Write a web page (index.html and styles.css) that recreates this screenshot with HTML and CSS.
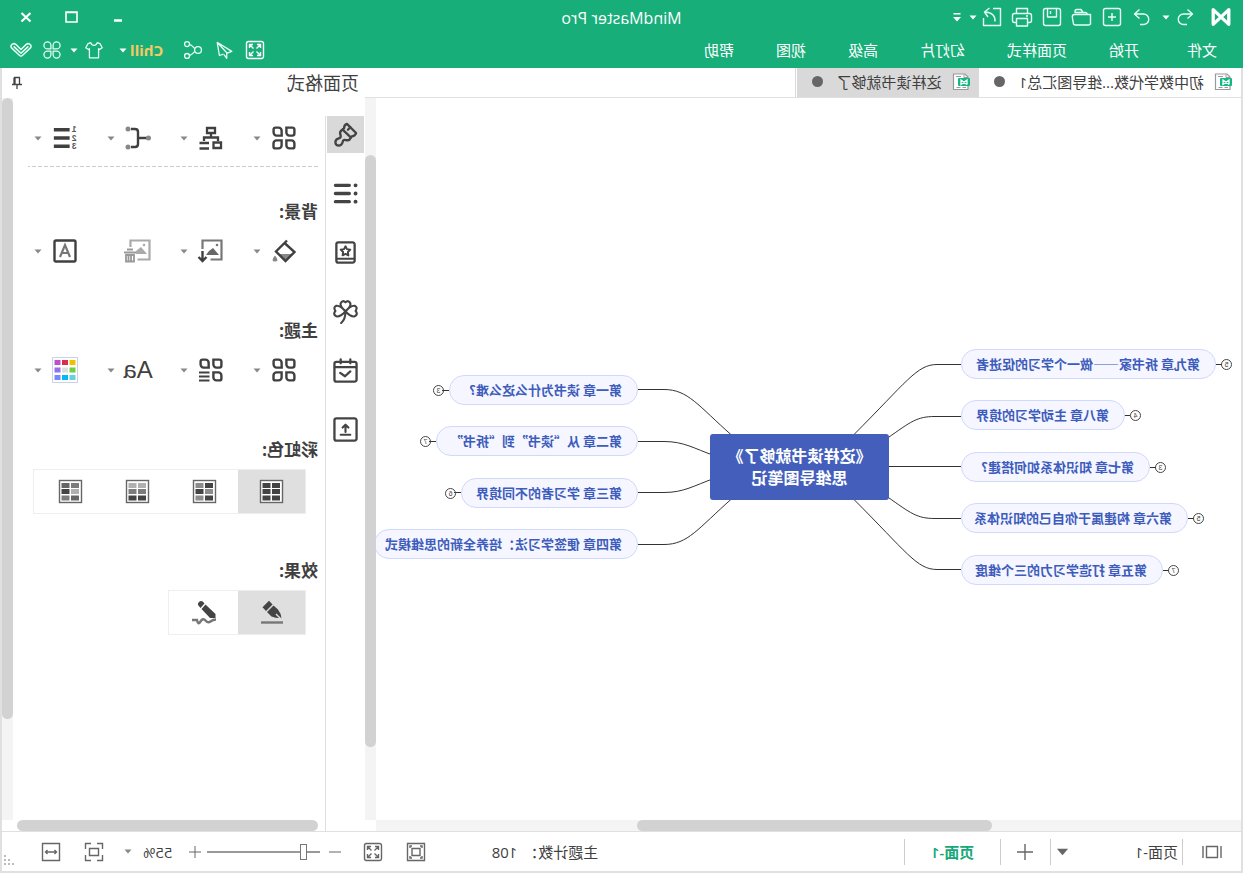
FILE: index.html
```html
<!DOCTYPE html>
<html lang="zh-CN">
<head>
<meta charset="utf-8">
<title>MindMaster Pro</title>
<link rel="stylesheet" href="styles.css">
</head>
<body>
<svg class="sprite" aria-hidden="true">
  <symbol id="caret" viewBox="0 0 8 5"><path d="M.5.5h7L4 4.5z" fill="currentColor"/></symbol>
  <symbol id="leaves" viewBox="0 0 24 24"><g fill="none" stroke="currentColor" stroke-width="2.4"><path d="M1.6 3.6a2 2 0 0 1 2-2h6v5a3 3 0 0 1-3 3h-3a2 2 0 0 1-2-2z"/><path d="M14.4 4.6a3 3 0 0 1 3-3h3a2 2 0 0 1 2 2v3a3 3 0 0 1-3 3h-5.1z"/><path d="M1.6 17.4a3 3 0 0 1 3-3h5v5a3 3 0 0 1-3 3h-3a2 2 0 0 1-2-2z"/><path d="M14.4 14.4h5.1a3 3 0 0 1 3 3v3a2 2 0 0 1-2 2h-3.1a3 3 0 0 1-3-3z"/></g></symbol>
  <symbol id="expand" viewBox="0 0 20 20"><rect x="1.5" y="1.5" width="17" height="17" rx="2" fill="none" stroke="currentColor" stroke-width="1.4"/><path d="M4.5 8V4.5H8M12 4.5h3.5V8M15.500 12v3.500H12M8 15.500H4.500V12M5 5l3.500 3.500M15 5l-3.500 3.500M15 15l-3.500-3.500M5 15l3.500-3.500" fill="none" stroke="currentColor" stroke-width="1.400"/></symbol>
  <symbol id="doc" viewBox="0 0 18 18"><path d="M5 1h11.500v15.500H2V4z" fill="#fff" stroke="#999" stroke-width="1.200"/><path d="M6 1.500V4.500H2M4 14.500h3.500M9.500 14.500h4M9 3.500h5" fill="none" stroke="#999"/><rect x="0" y="5" width="12" height="8" rx="1" fill="#10b981"/><path d="M3 11.500V7l6 4.500V7l-6 4.500" fill="none" stroke="#fff" stroke-width="1.300"/></symbol>
</svg>

<div class="window">
  <header class="header">
    <div class="titlebar">
      <div class="quick">
        <svg class="logo" viewBox="0 0 24 24"><path d="M3.500 4v16L20.500 4v16z" fill="none" stroke="#fff" stroke-width="3.600" stroke-linejoin="round"/></svg>
        <button class="tool" aria-label="撤销"><svg viewBox="0 0 24 24"><path d="M9.500 4.500l-5 4.500 5 4.500M5 9h8.500a5 5 0 0 1 0 10.500H10"/></svg></button>
        <button class="drop" aria-label="撤销列表"><svg><use href="#caret"/></svg></button>
        <button class="tool" aria-label="重做"><svg viewBox="0 0 24 24"><path d="M14.500 4.500l5 4.500-5 4.500M19 9h-8.500a5 5 0 0 0 0 10.500H14"/></svg></button>
        <button class="tool" aria-label="新建"><svg viewBox="0 0 24 24"><rect x="3.500" y="3.500" width="17" height="17" rx="2"/><path d="M12 8v8M8 12h8"/></svg></button>
        <button class="tool" aria-label="打开"><svg viewBox="0 0 24 24"><path d="M3.500 19.500V9.500h3q.5-2 2-2H19V6.500q0-2-2-2h-4l-2 3M3.500 9.500v8.500q0 2 2 2h13q2 0 2.200-2l1-6q0-2.500-2-2.500H6" /></svg></button>
        <button class="tool" aria-label="保存"><svg viewBox="0 0 24 24"><rect x="3.500" y="3.500" width="17" height="17" rx="2"/><path d="M7.500 4v8h9V4M13.500 6v3"/></svg></button>
        <button class="tool" aria-label="打印"><svg viewBox="0 0 24 24"><path d="M6.500 8.500v-5h11v5M6.500 17.500h-2q-2 0-2-2v-5q0-2 2-2h15q2 0 2 2v5q0 2-2 2h-2M6.500 13.500h11v7.500h-11zM6 11h2"/></svg></button>
        <button class="tool" aria-label="导出"><svg viewBox="0 0 24 24"><path d="M11 3.500H3.500v17h17V13M9 16.500c-.5-6 3-9 10-9.500M14.500 3l5 4-3.500 5"/></svg></button>
        <button class="drop" aria-label="导出选项"><svg><use href="#caret"/></svg></button>
        <button class="overflow" aria-label="自定义工具栏"><svg viewBox="0 0 10 12"><path d="M1.500 2h7v1.500h-7zM1 6h8l-4 4.500z"/></svg></button>
      </div>
      <h1 class="title">MindMaster Pro</h1>
      <div class="controls">
        <button aria-label="最小化"><svg viewBox="0 0 16 16"><path d="M4 11.500h8" stroke-width="2.500"/></svg></button>
        <button aria-label="最大化"><svg viewBox="0 0 16 16"><path d="M3 3h11v10H3zM3 3.500h11" stroke-width="1.600"/></svg></button>
        <button aria-label="关闭"><svg viewBox="0 0 16 16"><path d="M3.500 4l9 8.500M12.500 4l-9 8.500" stroke-width="2.200"/></svg></button>
      </div>
    </div>
    <div class="menubar">
      <nav class="menus">
        <button class="file">文件</button><button>开始</button><button>页面样式</button><button>幻灯片</button><button>高级</button><button>视图</button><button>帮助</button>
      </nav>
      <div class="extras">
        <button class="tool" aria-label="全屏"><svg class="s20"><use href="#expand"/></svg></button>
        <button class="tool" aria-label="发送"><svg viewBox="0 0 24 24"><path d="M19.500 3.500L3.500 13.500l5 2M19.500 3.500L17 18l-4.500-1.500M19.500 3.500L9 15v6l3-4"/></svg></button>
        <button class="tool" aria-label="分享"><svg viewBox="0 0 24 24"><circle cx="6.500" cy="12" r="3.700"/><circle cx="18.500" cy="5.500" r="2.700"/><circle cx="18.500" cy="18.500" r="2.700"/><path d="M10 10.500l2.500-2.500q1.500-1.500 3.300-1.800M10 13.500l2.500 2.500q1.500 1.500 3.300 1.800"/></svg></button>
        <button class="user">Chill</button>
        <button class="drop" aria-label="账户菜单"><svg><use href="#caret"/></svg></button>
        <button class="tool" aria-label="皮肤"><svg viewBox="0 0 24 24"><path d="M8.500 4l-3 1L3 9.500l3 2 1-1v10h10v-10l1 1 3-2L18.500 5l-3-1q-1 3-3.500 3T8.500 4z"/></svg></button>
        <button class="drop" aria-label="皮肤列表"><svg><use href="#caret"/></svg></button>
        <button class="tool" aria-label="应用"><svg viewBox="0 0 24 24"><path d="M10.800 10.800H7A3.800 3.800 0 1 1 10.800 7zM13.200 10.800V7a3.800 3.800 0 1 1 3.800 3.800zM10.800 13.200V17A3.800 3.800 0 1 1 7 13.200zM13.200 13.200H17a3.800 3.800 0 1 1-3.800 3.800z"/></svg></button>
        <button class="tool" aria-label="折叠"><svg viewBox="0 0 24 24"><path d="M1.500 6.500q2.500-2.500 5-.5l5.500 5.500L17.500 6q2.500-2 5 .500 1 2-.500 3.500l-8.500 8q-1.500 1.300-3 0L2 10q-1.500-1.500-.5-3.500zM4 8l8 7.500L20 8" stroke-width="1.700"/></svg></button>
      </div>
    </div>
  </header>

  <main class="workspace">
    <section class="document">
      <div class="tabs">
        <button class="tab"><svg><use href="#doc"/></svg><span>初中数学代数...维导图汇总1</span><i></i></button>
        <button class="tab active"><svg><use href="#doc"/></svg><span>这样读书就够了</span><i></i></button>
      </div>
      <div class="view">
        <div class="canvas">
          <svg class="links" width="865" height="722" aria-hidden="true">
            <path d="M280 266.500h24c20 0 30 17 84 71M280 318.500h26c18 0 24 5 48 22M280 368.500h80M280 420.500h26c18 0 24-5 48-22M280 471.500h24c20 0 30-17 84-71M603 291.500h-26c-24 0-34 16-68 46M603 343.500h-26c-20 0-30 7-50 14M603 394.500h-26c-20 0-30-7-50-14M603 446.500h-26c-24 0-34-16-68-46"/>
            <path d="M19 266.500h6M111 317.500h6M85 369.500h6M47 420.500h6M72 472.500h6M792 292.500h7M805 343.500h7M780 394.500h7"/>
          </svg>
          <div class="root">《这样读书就够了》<br>思维导图笔记</div>
          <div class="node n9">第九章 拆书家——做一个学习的促进者<b>5</b></div>
          <div class="node n8">第八章 主动学习的境界<b>4</b></div>
          <div class="node n7">第七章 知识体系如何搭建?<b>3</b></div>
          <div class="node n6">第六章 构建属于你自己的知识体系<b>5</b></div>
          <div class="node n5">第五章 打造学习力的三个维度<b>7</b></div>
          <div class="node right n1">第一章 读书为什么这么难?<b>3</b></div>
          <div class="node right n2">第二章 从“读书”到“拆书”<b>7</b></div>
          <div class="node right n3">第三章 学习者的不同境界<b>6</b></div>
          <div class="node right n4">第四章 便签学习法：培养全新的思维模式</div>
        </div>
        <div class="vscroll"><div class="thumb"></div></div>
        <div class="hscroll"><div class="thumb"></div></div>
      </div>
    </section>

    <aside class="panel">
      <div class="panel-head">
        <h2>页面格式</h2>
        <button class="pin" aria-label="固定"><svg viewBox="0 0 12 14"><path d="M3 1.500h6M3.500 1.500v7M8 1.500v7M9 1.500v7M1 8.500h10M6 8.500V13"/></svg></button>
      </div>
      <div class="panel-body">
        <div class="rail">
          <button class="on" aria-label="页面格式"><svg viewBox="0 0 26 26"><path d="M11.500 2L2 11.500q1 3 4.500 3.500l2.500 3.500q3 1 5 0 1.500 0 2 2.500 1 3.500 4.500 3.500 3-.5 3-3.500 0-3-3.500-4-2.500-.5-2-3 1.500-3-.5-5l-3-2.500q0-3.500-3-4.500z"/><path d="M16 8l-8.500 8M8 5.500L10.500 8"/></svg></button>
          <button aria-label="大纲"><svg viewBox="0 0 26 26"><path d="M9 4.500h14.500M9 13h14.500M9 21.500h14.500" stroke-width="3.400"/><path d="M2.500 4.500h.1M2.500 13h.1M2.500 21.500h.1" stroke-width="4"/></svg></button>
          <button aria-label="图标"><svg viewBox="0 0 26 26"><rect x="3.500" y="2.500" width="19" height="21" rx="2"/><path d="M4 19.500h18" stroke-width="2"/><path d="M13 6.500l1.500 3 3.500.5-2.500 2.500.5 3.500-3-1.500-3 1.500.5-3.500L8 10l3.500-.5z" stroke-width="2"/></svg></button>
          <button aria-label="剪贴画"><svg viewBox="0 0 26 26"><path d="M13 12.500Q7 8 8 4.500 10 .5 13 3.500q3-3 5 1 1 3.500-5 8zM13 13Q7 19 3.500 18-.5 16 2.500 12.500q-2.500-4 1-5.500 4-.5 9.500 6zM13 13q6 6 9.500 5 4-2 1-5.500 2.500-4-1-5.500-4-.5-9.500 6zM13 13q0 8 4.500 12" stroke-width="2.200"/></svg></button>
          <button aria-label="任务"><svg viewBox="0 0 26 26"><rect x="1.500" y="4" width="23" height="20.500" rx="2"/><path d="M2 9.500h22M8 1.500v4M18 1.500v4"/><path d="M18 14.500l-6-1-4 6.500" stroke="none"/><path d="M8 14l5.500 5 5-3.500"/></svg></button>
          <button aria-label="导出"><svg viewBox="0 0 26 26"><rect x="1.500" y="1.500" width="23" height="23" rx="2"/><path d="M8 18.500h10M13 15.500V9M10 11l3-3 3 3" stroke-width="2.200"/></svg></button>
        </div>
        <div class="content">
          <div class="options first">
            <button aria-label="布局"><svg class="ico"><use href="#leaves"/></svg><svg class="arrow"><use href="#caret"/></svg></button>
            <button aria-label="结构"><svg class="ico" viewBox="0 0 24 24"><path d="M8 2h8v5H8zM12 7v4M5 15v-3.500h14V15M2 16.500h7.500V22H2zM14 17h9.500M14 22.500h9.500" fill="none" stroke="currentColor" stroke-width="2.300"/></svg><svg class="arrow"><use href="#caret"/></svg></button>
            <button aria-label="连线"><svg class="ico wide" viewBox="0 0 28 26"><path d="M5 13h9M21 4h-4q-3 0-3 3v12q0 3 3 3h4" fill="none" stroke="currentColor" stroke-width="2.400"/><circle cx="3.500" cy="13" r="2.500" fill="#888"/><circle cx="24" cy="4" r="2.500" fill="#888"/><circle cx="24" cy="22" r="2.500" fill="#888"/></svg><svg class="arrow"><use href="#caret"/></svg></button>
            <button aria-label="编号"><svg class="ico wide" viewBox="0 0 28 28"><path d="M9 5h17M9 14h17M9 23h17" stroke="currentColor" stroke-width="3.800"/><g class="digits"><text x="4" y="8">1</text><text x="4" y="17">2</text><text x="4" y="26">3</text></g></svg><svg class="arrow"><use href="#caret"/></svg></button>
          </div>
          <h3>背景:</h3>
          <div class="options">
            <button aria-label="背景颜色"><svg class="ico" viewBox="0 0 24 24"><path d="M4 15h13l-6 6.500z" fill="#888"/><path d="M9 1.500l11 11-9.500 9.500L1.500 13 12 3.500" fill="none" stroke="currentColor" stroke-width="2.400"/><path d="M21 16.500q5 6 0 6t0-6z" fill="#888"/></svg><svg class="arrow"><use href="#caret"/></svg></button>
            <button aria-label="背景图片"><svg class="ico wide" viewBox="0 0 28 26"><path d="M22.500 11V2.500h-19v19h11" fill="none" stroke="#777" stroke-width="2.200"/><path d="M6 17l6-7 4 3 3 4z" fill="#666"/><circle cx="8" cy="7" r="1.300" fill="#777"/><path d="M22.500 13v10M18.500 19l4 4 4-4" fill="none" stroke="currentColor" stroke-width="2.400"/></svg><svg class="arrow"><use href="#caret"/></svg></button>
            <button aria-label="删除背景图片" disabled><svg class="ico wide" viewBox="0 0 28 26"><path d="M21.500 9V2.500H2.500v19h12" fill="none" stroke="#aaa" stroke-width="2.200"/><path d="M5 16l6-7 5 4v3z" fill="#aaa"/><circle cx="8" cy="7" r="1.300" fill="#aaa"/><path d="M16 14.500h12M19 11.500h6M18 17v6.500h8V17zM21 17v6M23.500 17v6" fill="none" stroke="#999" stroke-width="1.800"/></svg></button>
            <button aria-label="水印"><svg class="ico" viewBox="0 0 24 24"><rect x="1.500" y="1.500" width="21" height="21" rx="1.500" fill="none" stroke="currentColor" stroke-width="2.400"/><path d="M7 18l5-12 5 12M9 14h6" fill="none" stroke="#777" stroke-width="2.200"/></svg><svg class="arrow"><use href="#caret"/></svg></button>
          </div>
          <h3>主题:</h3>
          <div class="options">
            <button aria-label="主题样式"><svg class="ico"><use href="#leaves"/></svg><svg class="arrow"><use href="#caret"/></svg></button>
            <button aria-label="主题列表"><svg class="ico" viewBox="0 0 24 24"><g fill="none" stroke="currentColor" stroke-width="2.400"><path d="M1.600 3.600a2 2 0 0 1 2-2h6v5a3 3 0 0 1-3 3h-3a2 2 0 0 1-2-2z"/><path d="M14.400 4.600a3 3 0 0 1 3-3h3a2 2 0 0 1 2 2v3a3 3 0 0 1-3 3h-5.100z"/><path d="M1.600 17.400a3 3 0 0 1 3-3h5v5a3 3 0 0 1-3 3h-3a2 2 0 0 1-2-2z"/><path d="M13.500 14.500H24M13.500 18.500H24M13.500 22.500H24" stroke-width="2"/></g></svg><svg class="arrow"><use href="#caret"/></svg></button>
            <button aria-label="主题字体"><span class="aa">Aa</span><svg class="arrow"><use href="#caret"/></svg></button>
            <button aria-label="主题颜色"><svg class="ico wide" viewBox="0 0 26 26"><rect x=".5" y=".5" width="25" height="25" fill="#fff" stroke="#ccd3e8"/><g><path d="M2.500 3h6v5h-6z" fill="#eec200"/><path d="M10 3h6v5h-6z" fill="#dc2b4e"/><path d="M17.500 3h6v5h-6z" fill="#bd50cc"/><path d="M2.500 10.500h6v5h-6z" fill="#72cf3e"/><path d="M10 10.500h6v5h-6z" fill="#ddd"/><path d="M17.500 10.500h6v5h-6z" fill="#9470ec"/><path d="M2.500 18h6v5h-6z" fill="#67d0dd"/><path d="M10 18h6v5h-6z" fill="#05b8f5"/><path d="M17.500 18h6v5h-6z" fill="#7688ff"/></g></svg><svg class="arrow"><use href="#caret"/></svg></button>
          </div>
          <h3>彩虹色:</h3>
          <div class="group four">
            <button class="on" aria-label="单色"><svg viewBox="0 0 25 25"><rect x="1.500" y="1.500" width="22" height="22"/><path d="M4 4h8v5H4zM13.500 4h8v5h-8zM4 10h8v5H4zM13.500 10h8v5h-8zM4 16.500h8v5H4zM13.500 16.500h8v5h-8z" fill="#444"/></svg></button>
            <button aria-label="彩虹色一"><svg viewBox="0 0 25 25"><rect x="1.500" y="1.500" width="22" height="22"/><path d="M4 4h8v5H4zM13.500 10h8v5h-8zM4 16.500h8v5H4z" fill="#444"/><path d="M13.500 4h8v5h-8zM4 10h8v5H4zM13.500 16.500h8v5h-8z" fill="#8c8c8c"/></svg></button>
            <button aria-label="彩虹色二"><svg viewBox="0 0 25 25"><rect x="1.500" y="1.500" width="22" height="22"/><path d="M4 4h8v5H4zM13.500 4h8v5h-8z" fill="#b0b0b0"/><path d="M4 10h8v5H4zM13.500 10h8v5h-8z" fill="#7c7c7c"/><path d="M4 16.500h8v5H4zM13.500 16.500h8v5h-8z" fill="#444"/></svg></button>
            <button aria-label="彩虹色三"><svg viewBox="0 0 25 25"><rect x="1.500" y="1.500" width="22" height="22"/><path d="M4 4h8v5H4zM13.500 16.500h8v5h-8z" fill="#7c7c7c"/><path d="M4 10h8v5H4z" fill="#b0b0b0"/><path d="M4 16.500h8v5H4zM13.500 4h8v5h-8z" fill="#666"/><path d="M13.500 10h8v5h-8z" fill="#444"/></svg></button>
          </div>
          <h3 class="after">效果:</h3>
          <div class="group two">
            <button class="on" aria-label="普通"><svg viewBox="0 0 25 25"><path d="M1 22.500h22" stroke="#777" stroke-width="2.400"/><path d="M11.500 4.500L15 .8l6.500 6.500L18 11zM10.500 5.500l6.500 6.500-4.500 4.500q-4 1.500-7.500 1.500l3.500-3.500-1-1L4 17q-1 .5-1.500 1.500Q2.500 14 6 9.500z" fill="#444"/></svg></button>
            <button aria-label="手绘"><svg viewBox="0 0 25 25"><path d="M1 19.500q3 0 5.500 2t5-1 5 1 3.500-1.500h5" fill="none" stroke="#777" stroke-width="2.400"/><path d="M12.500 3.500q2.500-3.500 5-2 2 1 1.500 3.500l-2.500 3zM11.500 4.500l4 4.500-8.500 9H1.500v-4z" fill="#444"/></svg></button>
          </div>
        </div>
        <div class="vscroll"><div class="thumb"></div></div>
        <div class="hscroll"><div class="thumb"></div></div>
      </div>
    </aside>
  </main>

  <footer class="status">
    <button class="pages" aria-label="页面列表"><svg viewBox="0 0 20 16"><path d="M1 2v12M19 2v12M4.500 2.500h11v11h-11z"/></svg></button>
    <button class="current"><span>页面-1</span><svg><use href="#caret"/></svg></button>
    <button class="add" aria-label="添加页面"><svg viewBox="0 0 18 18"><path d="M9 1v16M1 9h16"/></svg></button>
    <button class="page">页面-1</button>
    <div class="count">主题计数：<span>108</span></div>
    <div class="zoom">
      <button class="sbtn" aria-label="适应窗口"><svg viewBox="0 0 20 20"><path d="M1.500 1.500h17v17h-17zM6 6.500h8v7H6zM4 6V4h2M14 4h2v2M16 14v2h-2M6 16H4v-2"/></svg></button>
      <button class="sbtn" aria-label="全屏"><svg><use href="#expand"/></svg></button>
      <button class="step" aria-label="缩小"><svg viewBox="0 0 14 14"><path d="M1 7h12"/></svg></button>
      <input type="range" min="0" max="100" value="12" aria-label="缩放">
      <button class="step" aria-label="放大"><svg viewBox="0 0 14 14"><path d="M1 7h12M7 1v12"/></svg></button>
      <button class="percent"><span>55%</span><svg><use href="#caret"/></svg></button>
      <button class="sbtn" aria-label="适应页面"><svg viewBox="0 0 20 20"><path d="M7 1.500H1.500V7M13 1.500h5.500V7M18.500 13v5.500H13M7 18.500H1.500V13M5.500 6.500h9v7h-9z"/></svg></button>
      <button class="sbtn" aria-label="适应宽度"><svg viewBox="0 0 20 20"><path d="M1.500 1.500h17v17h-17zM4.500 10h11M6.500 8l-2 2 2 2M13.500 8l2 2-2 2"/></svg></button>
      <svg class="grip" viewBox="0 0 10 10"><path d="M8 0h2v2H8zM8 4h2v2H8zM4 4h2v2H4zM8 8h2v2H8zM4 8h2v2H4zM0 8h2v2H0z"/></svg>
    </div>
  </footer>
</div>
</body>
</html>
```
FILE: styles.css
```css
* { box-sizing: border-box; }
html, body { height: 100%; margin: 0; }
body {
  overflow: hidden;
  color: #404040;
  font: 15px/20px "Open Sans", "Noto Sans CJK SC", sans-serif;
}
button {
  display: flex;
  align-items: center;
  justify-content: center;
  flex: none;
  margin: 0;
  padding: 0;
  border: 0;
  background: none;
  color: inherit;
  font: inherit;
  white-space: nowrap;
}
h1, h2, h3 { margin: 0; font-weight: 400; }
svg { display: block; flex: none; }
.sprite { position: absolute; width: 0; height: 0; }

/* The whole interface is laid out mirrored */
.window {
  display: flex;
  flex-direction: column;
  height: 100vh;
  transform: scaleX(-1);
  background: #fff;
}

/* Header */
.header { background: #17ae7a; color: #fff; }
.titlebar {
  display: grid;
  grid-template-columns: 1fr auto 1fr;
  align-items: center;
  height: 34px;
}
.quick, .controls, .extras, .menus { display: flex; align-items: center; }
.quick { padding-left: 10px; }
.logo { width: 24px; height: 22px; margin-right: 9px; }
.title { padding-top: 2px; font-size: 16px; line-height: 22px; }
.tool { width: 30px; height: 30px; }
.tool svg {
  width: 24px;
  height: 24px;
  fill: none;
  stroke: #e6fff5;
  stroke-width: 1.400;
  stroke-linejoin: round;
}
.tool .s20 { width: 20px; height: 20px; stroke: none; }
.drop { width: 8px; height: 20px; margin-right: 5px; }
.drop svg { width: 8px; height: 5px; }
.overflow { width: 14px; height: 20px; }
.overflow svg { width: 10px; height: 12px; fill: #fff; }
.controls { justify-content: flex-end; padding-right: 3px; }
.controls button { width: 46px; height: 32px; }
.controls svg { width: 16px; height: 16px; fill: none; stroke: #fff; }
.menubar {
  display: flex;
  justify-content: space-between;
  height: 34px;
  padding: 0 6px 2px 26px;
}
.menus { gap: 42px; }
.menus .file { margin-right: 6px; }
.extras { gap: 1px; }
.extras .drop { margin-right: 2px; }
.extras .tool svg { width: 22px; height: 22px; }
.extras .tool .s20 { width: 20px; height: 20px; }
.user { margin-left: 14px; color: #f5c963; font-weight: 700; }
.user + .drop { margin: 0 9px 0 2px; }

/* Workspace */
.workspace {
  display: flex;
  flex: 1;
  min-height: 0;
  border: solid #e0e0e0;
  border-width: 0 2px;
}
.document { display: flex; flex: 1; flex-direction: column; min-width: 0; }
.tabs { display: flex; height: 30px; border-bottom: 1px solid #e0e0e0; }
.tab { gap: 10px; padding: 0 15px 2px 9px; }
.tab svg { width: 18px; height: 18px; }
.tab i { width: 11px; height: 11px; margin-left: 4px; border-radius: 50%; background: #666; }
.tab.active { background: #d9d9d9; box-shadow: 1px 0 #fff, 2px 0 #d9d9d9; }
.view {
  display: grid;
  flex: 1;
  grid-template: minmax(0, 1fr) 11px / minmax(0, 1fr) 11px;
  min-height: 0;
}
.vscroll, .hscroll { display: flex; background: #f4f4f4; }
.vscroll { flex-direction: column; }
.thumb { border-radius: 6px; background: #d2d2d2; }
.view .vscroll .thumb { height: 82%; margin-top: 57px; }
.view .hscroll .thumb { width: 41%; margin-left: 249px; }

/* Mind map */
.canvas { position: relative; overflow: hidden; }
.links { position: absolute; top: 0; left: 0; fill: none; stroke: #333; stroke-width: 1; }
.root {
  position: absolute;
  top: 336px;
  left: 352px;
  width: 179px;
  height: 66px;
  padding-top: 10px;
  border-radius: 3px;
  background: #435fbb;
  color: #fff;
  font: 700 16px/22px "Noto Sans CJK SC", sans-serif;
  text-align: center;
}
.node {
  position: absolute;
  height: 30px;
  padding-left: 15px;
  border: 1px solid #d0d8fb;
  border-radius: 15px;
  background: #f5f6ff;
  color: #3d5cbc;
  font: 700 13px/28px "Noto Sans CJK SC", sans-serif;
  white-space: nowrap;
}
.node b {
  position: absolute;
  top: 9px;
  right: 100%;
  width: 11px;
  height: 11px;
  margin-right: 6px;
  border: 1px solid #444;
  border-radius: 50%;
  color: #444;
  font: 400 7px/9px "Liberation Sans", sans-serif;
  text-align: center;
}
.node.right b { right: auto; left: 100%; margin-left: 6px; }
.n9 { top: 251px; left: 25px; width: 255px; }
.n8 { top: 302px; left: 116px; width: 164px; }
.n7 { top: 354px; left: 91px; width: 189px; }
.n6 { top: 405px; left: 53px; width: 227px; }
.n5 { top: 457px; left: 78px; width: 202px; }
.n1 { top: 277px; left: 603px; width: 189px; }
.n2 { top: 328px; left: 603px; width: 202px; }
.n3 { top: 380px; left: 603px; width: 177px; }
.n4 { top: 431px; left: 603px; width: 264px; }

/* Format panel */
.panel { display: flex; flex: none; flex-direction: column; width: 363px; }
.panel-head {
  display: flex;
  align-items: center;
  justify-content: space-between;
  height: 30px;
  padding: 0 9px 0 6px;
}
.panel-head h2 { font-size: 18px; line-height: 24px; }
.pin svg { width: 12px; height: 14px; fill: none; stroke: #444; stroke-width: 1.300; }
.panel-body {
  display: grid;
  flex: 1;
  grid-template: minmax(0, 1fr) 11px / 40px minmax(0, 1fr) 11px;
  min-height: 0;
}
.rail {
  display: flex;
  grid-row: 1 / 3;
  flex-direction: column;
  gap: 22px;
  margin-top: 18px;
  padding-left: 1px;
  border-right: 1px solid #dedede;
}
.rail button { width: 37px; height: 37px; }
.rail .on { background: #d9d9d9; }
.rail svg {
  width: 25px;
  height: 25px;
  fill: none;
  stroke: #444;
  stroke-width: 2.400;
  stroke-linecap: round;
  stroke-linejoin: round;
}
.content { padding: 20px 15px 0 7px; overflow: hidden; }
.options { display: flex; margin-right: -20px; }
.options.first {
  margin: 0;
  padding-bottom: 9px;
  background: repeating-linear-gradient(90deg, #ccc 0 4px, transparent 4px 6px) bottom / 100% 1px no-repeat;
}
.options button { justify-content: flex-start; width: 73px; height: 40px; padding-left: 19px; }
.ico { width: 24px; height: 24px; margin: 0 3px; }
.ico.wide { width: 28px; height: 26px; margin: 0 1px; }
.arrow { width: 8px; height: 5px; margin-left: 8px; color: #888; }
.digits { font: 700 9px/9px "Liberation Sans", sans-serif; fill: #555; text-anchor: middle; }
.aa { width: 30px; font: 400 24px/30px "Liberation Sans", sans-serif; }
.content h3 { margin: 48px 0 7px; font-size: 17px; font-weight: 700; line-height: 24px; }
.content .first + h3 { margin-top: 33px; }
.content h3.after { margin-top: 45px; }
.group { display: flex; height: 45px; margin-left: 12px; border: 1px solid #eee; }
.group.four { width: 273px; }
.group.two { width: 138px; }
.group button { width: 67px; }
.group .on { background: #dfdfdf; }
.group svg { width: 25px; height: 25px; }
.group rect { fill: #fff; stroke: #666; stroke-width: 1.400; }
.panel-body .vscroll .thumb { height: 86%; }
.panel-body .hscroll { background: #fff; }
.panel-body .hscroll .thumb { flex: 1; margin: 0 4px 0 7px; }

/* Status bar */
.status {
  display: flex;
  align-items: center;
  height: 42px;
  border: 2px solid #e0e0e0;
  border-top-width: 1px;
}
.status > button { height: 26px; border-right: 1px solid #ccc; }
.status svg { fill: none; stroke: #666; stroke-width: 1.400; }
.pages { width: 59px; }
.pages svg { width: 20px; height: 16px; }
.current { width: 132px; }
.status .current { justify-content: space-between; padding: 0 5px 0 4px; }
.current svg { width: 13px; height: 8px; color: #666; stroke: none; }
.add { width: 50px; }
.add svg { width: 18px; height: 18px; }
.page { width: 96px; color: #16a878; font-weight: 600; }
.count { display: flex; gap: 6px; margin-left: auto; margin-right: 66px; }
.zoom { display: flex; align-items: center; }
.sbtn { width: 20px; height: 20px; margin-right: 23px; color: #666; }
.sbtn svg { width: 20px; height: 20px; }
.sbtn use { stroke: none; }
.step { width: 14px; height: 20px; }
.step svg { width: 14px; height: 14px; stroke-width: 1; }
.sbtn + .step { margin-left: -2px; }
.zoom input {
  width: 113px;
  height: 18px;
  margin: 0 5px 0 8px;
  appearance: none;
  background: linear-gradient(#999, #999) center / 100% 2px no-repeat;
}
.zoom input::-webkit-slider-thumb {
  width: 7px;
  height: 16px;
  appearance: none;
  border: 1px solid #777;
  background: #fff;
}
.percent { gap: 11px; margin: 0 20px 0 15px; }
.percent svg { width: 8px; height: 5px; color: #888; stroke: none; }
.grip { align-self: flex-end; width: 10px; height: 10px; margin: 16px 2px 0 4px; }
.status .grip { fill: #bbb; stroke: none; }
```
